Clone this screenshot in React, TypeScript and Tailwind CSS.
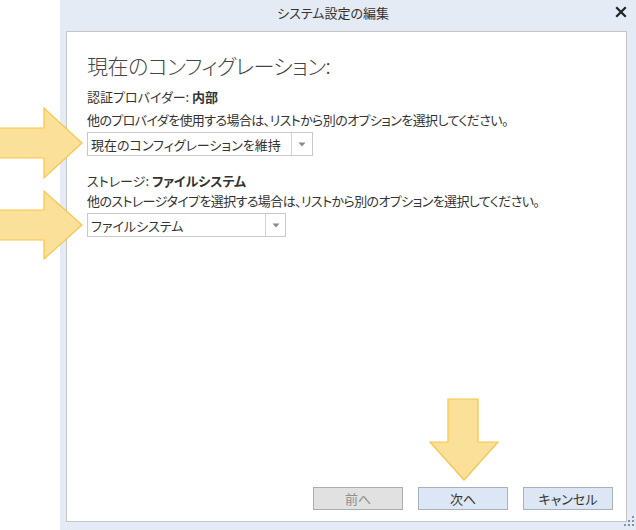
import React from "react";

const font = "font-['Meiryo_UI','Noto_Sans_CJK_JP',sans-serif] [font-feature-settings:'palt']";

function Caret() {
  return (
    <svg width="8" height="5" viewBox="0 0 8 5">
      <polygon points="0.5,0.5 7.5,0.5 4,4.5" fill="#8a8a8a" />
    </svg>
  );
}

function Select({ text, w, arrowW }: { text: string; w: string; arrowW: string }) {
  return (
    <div className={`${w} h-[24px] border border-[#c9c9c9] bg-white flex items-stretch`}>
      <div className="flex-1 flex items-center pl-[3px] text-[13px] text-[#333] leading-none truncate">{text}</div>
      <div className={`${arrowW} border-l border-[#d4d4d4] flex items-center justify-center`}>
        <Caret />
      </div>
    </div>
  );
}

function Btn({ label, disabled }: { label: string; disabled?: boolean }) {
  return (
    <div
      className={
        "w-[90px] h-[23px] flex items-center justify-center text-[13px] leading-none border " +
        (disabled
          ? "bg-[#e1e1e1] border-[#adadad] text-[#8f8f8f]"
          : "bg-[#dce6f4] border-[#a7b1bf] text-[#333]")
      }
    >
      {label}
    </div>
  );
}

export default function App() {
  return (
    <div className={`relative w-[636px] h-[530px] bg-white flex overflow-hidden ${font}`}>
      <div className="w-[60px] shrink-0" />
      <div className="flex-1 bg-[#e4ebf5] flex flex-col">
        <div className="h-[31px] shrink-0 flex items-center justify-center pr-[30px] pb-[5px] text-[13px] text-[#333] relative">
          システム設定の編集
          <svg className="absolute right-[9px] top-[6px]" width="12" height="12" viewBox="0 0 12 12">
            <path d="M2 2 L10 10 M10 2 L2 10" stroke="#222" strokeWidth="2.2" strokeLinecap="square" />
          </svg>
        </div>
        <div className="flex-1 ml-[6px] mr-[9px] mb-[8px] bg-white border border-[#c6c6c6] flex flex-col pl-[20px]">
          <h1 className="mt-[19px] text-[21px] leading-[28px] font-light text-[#444] tracking-[-0.5px]">
            現在のコンフィグレーション:
          </h1>
          <div className="mt-[8px] text-[13px] leading-[20px] text-[#333]">
            認証プロバイダー: <span className="font-bold">内部</span>
          </div>
          <div className="mt-[3px] text-[13px] leading-[20px] text-[#333] tracking-[-0.6px]">
            他のプロバイダを使用する場合は、リストから別のオプションを選択してください。
          </div>
          <div className="mt-[2px]">
            <Select text="現在のコンフィグレーションを維持" w="w-[226px]" arrowW="w-[21px]" />
          </div>
          <div className="mt-[15px] text-[13px] leading-[20px] text-[#333]">
            ストレージ: <span className="font-bold">ファイルシステム</span>
          </div>
          <div className="mt-[0px] text-[13px] leading-[20px] text-[#333] tracking-[-0.6px]">
            他のストレージタイプを選択する場合は、リストから別のオプションを選択してください。
          </div>
          <div className="mt-[2px]">
            <Select text="ファイルシステム" w="w-[199px]" arrowW="w-[20px]" />
          </div>
          <div className="mt-auto flex justify-end gap-[15px] pr-[13px] pb-[11px]">
            <Btn label="前へ" disabled />
            <Btn label="次へ" />
            <Btn label="キャンセル" />
          </div>
        </div>
      </div>

      {/* overlay arrows */}
      <svg className="absolute left-0 top-0 pointer-events-none" width="636" height="530" viewBox="0 0 636 530">
        <polygon
          points="-2,128 44,128 44,108 82,143 44,178 44,158 -2,158"
          fill="#fbe099"
          stroke="#f7c649"
          strokeWidth="1.2"
          strokeLinejoin="miter"
        />
        <polygon
          points="-2,210 44,210 44,191 82,225 44,259 44,240 -2,240"
          fill="#fbe099"
          stroke="#f7c649"
          strokeWidth="1.2"
        />
        <polygon
          points="448,399 478,399 478,442 498,442 464,480 430,442 448,442"
          fill="#fbe099"
          stroke="#f7c649"
          strokeWidth="1.2"
        />
        {/* resize grip */}
        <g fill="#8592a3">
          <rect x="632" y="516" width="2" height="2" />
          <rect x="628" y="520" width="2" height="2" />
          <rect x="632" y="520" width="2" height="2" />
          <rect x="624" y="524" width="2" height="2" />
          <rect x="628" y="524" width="2" height="2" />
          <rect x="632" y="524" width="2" height="2" />
        </g>
      </svg>
    </div>
  );
}
